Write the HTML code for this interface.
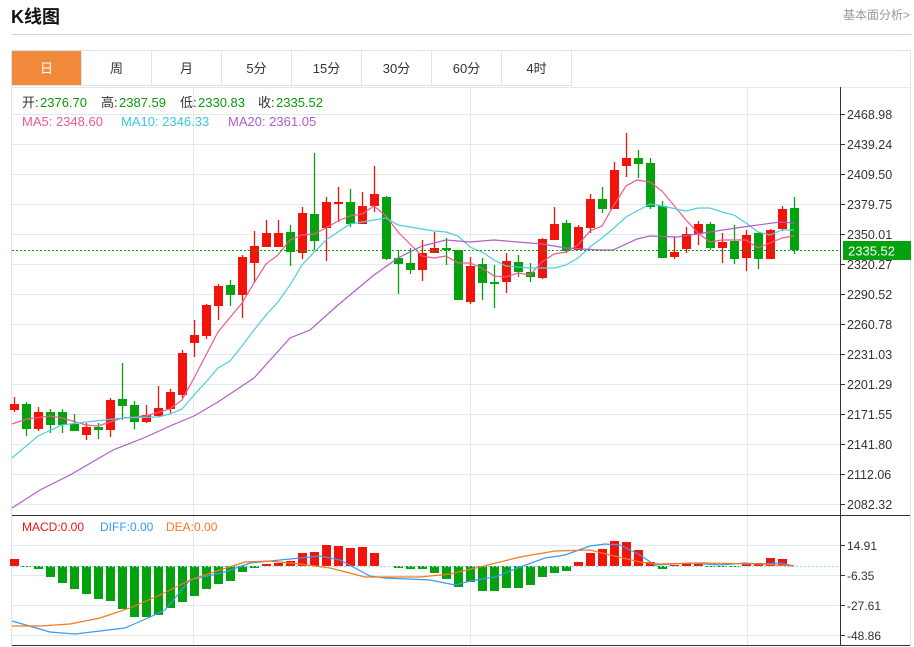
<!DOCTYPE html>
<html><head><meta charset="utf-8"><style>
*{margin:0;padding:0;box-sizing:border-box}
body{width:914px;height:647px;background:#fff;font-family:"Liberation Sans","Noto Sans CJK SC",sans-serif;position:relative;overflow:hidden}
.t{position:absolute;left:11px;top:3px;font-size:18px;font-weight:bold;color:#111}
.more{position:absolute;right:4px;top:6px;font-size:12px;color:#999}
.hl{position:absolute;left:11px;top:34px;width:900px;height:1px;background:#d0d0d0}
.box{position:absolute;left:11px;top:50px;width:900px;height:596px;border:1px solid #dde3ea}
.tabs{position:absolute;left:12px;top:51px;height:35px;display:flex}
.tabs div{width:70px;height:35px;border-right:1px solid #dde3ea;border-bottom:1px solid #dde3ea;text-align:center;line-height:35px;font-size:13px;color:#333}
.tabs div.a{background:#f28a3c;color:#fff}
svg{position:absolute;left:0;top:0}
</style></head><body>
<div class="t">K线图</div>
<div class="more">基本面分析&gt;</div>
<div class="hl"></div>
<div class="box"></div>
<div class="tabs"><div class="a">日</div><div>周</div><div>月</div><div>5分</div><div>15分</div><div>30分</div><div>60分</div><div>4时</div></div>
<svg id="s" width="914" height="647" font-family="Liberation Sans, Noto Sans CJK SC, sans-serif"></svg>
<script>
var s='';
function L(x1,y1,x2,y2,c,w,d){s+='<line x1="'+x1+'" y1="'+y1+'" x2="'+x2+'" y2="'+y2+'" stroke="'+c+'" stroke-width="'+(w||1)+'"'+(d?' stroke-dasharray="'+d+'"':'')+'/>';}
function R(x,y,w,h,c){s+='<rect x="'+x+'" y="'+y+'" width="'+w+'" height="'+Math.max(h,1)+'" fill="'+c+'"/>';}
function T(x,y,t,c,sz,a){s+='<text x="'+x+'" y="'+y+'" fill="'+c+'" font-size="'+(sz||12)+'"'+(a?' text-anchor="'+a+'"':'')+'>'+t+'</text>';}
function P(pts,c){s+='<polyline fill="none" stroke="'+c+'" stroke-width="1.2" points="'+pts.map(function(p){return p.join(',')}).join(' ')+'"/>';}
for(var k=0;k<14;k++){var y=114+30*k;L(12,y+.5,840,y+.5,'#e3e9f0');}
L(12,87.5,910,87.5,'#e3e9f0');
[193.5,470.5,747.5].forEach(function(x){L(x,87,x,515,'#e3e9f0');L(x,516,x,645,'#e3e9f0');});
[545,575,605,635].forEach(function(y){L(12,y+.5,840,y+.5,'#e3e9f0');});
L(840.5,87,840.5,645,'#333');
L(12,515.5,910,515.5,'#333');
var labs=['2468.98','2439.24','2409.50','2379.75','2350.01','2320.27','2290.52','2260.78','2231.03','2201.29','2171.55','2141.80','2112.06','2082.32'];
labs.forEach(function(t,k){var y=114+30*k;L(840,y+.5,845,y+.5,'#333');T(847,y+5,t,'#333',12.5);});
var C=[['r',404,410,397,412],['g',404,429,402,436],['r',412,429,407,431],['g',412,425,409,433],['g',412,425,409,433],['g',424,431,414,431],['r',427,435,423,440],['g',427,430,423,439],['r',400,430,398,437],['g',399,406,363,420],['g',405,422,401,429],['r',415,422,405,423],['r',408,416,386,417],['r',392,409,389,413],['r',353,395,350,398],['r',335,343,320,357],['r',305,336,304,339],['r',286,306,284,320],['g',285,295,280,306],['r',257,295,255,318],['r',246,263,231,283],['r',233,247,220,247],['r',233,247,220,247],['g',232,252,225,266],
['r',213,253,207,259],['g',214,241,153,250],['r',202,228,197,261],['r',202,204,187,222],['g',202,224,189,227],['r',206,224,192,224],['r',194,206,166,212],['g',197,259,196,260],['g',258,264,250,294],['g',263,270,248,274],['r',253,270,240,281],['r',248,253,232,253],['g',248,250,238,265],['g',250,300,250,300],['r',266,302,257,304],['g',264,283,258,300],['g',282,284,265,308],['r',261,282,253,293],['g',262,272,255,277],['g',272,277,263,282],['r',239,278,238,279],['r',224,240,207,240],['g',223,251,220,253],['r',227,250,225,250],['r',199,228,194,233],['g',199,209,187,213],['r',170,209,162,209],
['r',158,166,133,177],['g',158,164,150,178],['g',163,207,158,209],['g',206,258,201,258],['r',252,257,237,259],['r',234,249,227,253],['r',224,234,221,245],['g',224,248,222,250],['r',242,248,233,263],['g',241,259,225,264],['r',235,258,230,271],['g',233,259,232,269],['r',230,259,229,259],['r',209,229,206,231],['g',208,250,197,254]];
C.forEach(function(c,i){var x=14.5+12*i,col=c[0]=='r'?'#f2140a':'#04a20f';L(x,c[3],x,c[4],col,1.3);R(x-4.5,c[1],9,c[2]-c[1],col);});
P([[12,424],[27,419],[50,416],[62,418],[86,425],[98,426],[122,418],[146,416],[170,409],[182,400],[194,378],[206,355],[218,332],[242,303],[254,283],[266,264],[278,255],[290,240],[302,235],[314,234],[326,228],[338,221],[350,216],[362,214],[374,206],[386,216],[398,232],[410,244],[422,256],[434,258],[446,256],[458,263],[470,263],[482,268],[494,276],[506,277],[518,273],[530,275],[542,262],[554,254],[566,252],[578,245],[590,231],[602,226],[614,205],[626,186],[637,180],[650,182],[662,191],[686,220],[698,233],[710,242],[722,240],[746,240],[758,248],[770,243],[782,238],[794,236]],'#ef5a8a');
P([[12,458],[38,436],[62,425],[86,422],[122,418],[158,417],[170,414],[182,409],[194,395],[206,382],[218,368],[230,361],[242,346],[254,330],[266,315],[278,302],[290,285],[302,265],[326,240],[350,224],[374,220],[386,218],[398,225],[422,229],[434,231],[446,232],[458,236],[470,247],[482,252],[494,260],[506,266],[530,268],[554,268],[566,265],[578,258],[590,247],[602,238],[614,228],[626,217],[650,204],[662,206],[686,211],[698,208],[710,208],[722,212],[734,215],[746,223],[758,232],[770,235],[782,230],[794,230]],'#4dcde3');
P([[12,508],[40,490],[70,475],[113,450],[146,437],[170,426],[194,416],[218,402],[254,378],[290,338],[310,330],[338,305],[374,275],[398,258],[422,246],[446,240],[470,242],[494,240],[518,242],[542,244],[566,248],[600,250],[613,250],[637,239],[650,236],[677,237],[710,232],[743,227],[780,222],[794,223]],'#b35cc8');
L(12,250.5,840,250.5,'#0a0',1,'2,2');
R(843,241,68,19,'#04a20f');T(848,255.5,'2335.52','#fff',13);
var G='#0a9a0a';
T(22,107,'开:','#333',13);T(40,107,'2376.70',G,13);
T(101,107,'高:','#333',13);T(119,107,'2387.59',G,13);
T(180,107,'低:','#333',13);T(198,107,'2330.83',G,13);
T(258,107,'收:','#333',13);T(276,107,'2335.52',G,13);
T(22,126,'MA5:  2348.60','#ef5a8a',13);T(121,126,'MA10:  2346.33','#3cc8e0',13);T(228,126,'MA20:  2361.05','#b35cc8',13);
T(22,531,'MACD:0.00','#f2140a',12);T(100,531,'DIFF:0.00','#3a9af0',12);T(166,531,'DEA:0.00','#f57a1f',12);
[['14.91',545],['-6.35',575],['-27.61',605],['-48.86',635]].forEach(function(a){L(840,a[1]+.5,845,a[1]+.5,'#333');T(847,a[1]+5,a[0],'#333',12);});
var Z=566,M=[559,567,569,577,583,589,594,599,601,609,617,617,615,608,602,596,589,584,581,572,568,564,563,561,553,552,545,546,548,547,553,566,568,569,569,573,579,587,582,591,591,588,588,585,577,573,571,562,553,549,541,542,550,562,569,565,563,563,567,567,567,563,563,558,559,566];
M.forEach(function(v,i){var x=14.5+12*i;if(v<Z)R(x-4.5,v,9,Z-v,'#f2140a');else if(v>Z)R(x-4.5,Z,9,v-Z,'#04a20f');});
L(12,566.5,840,566.5,'#9fdde8',1.2,'2,2');
P([[12,621],[50,632],[75,634],[100,631],[125,628],[150,617],[165,610],[190,580],[225,572],[250,563],[270,561],[300,558],[320,556],[340,560],[370,576],[385,578],[430,580],[455,585],[470,581],[495,577],[520,567],[545,558],[565,555],[590,546],[605,544],[620,545],[640,555],[655,565],[690,563],[720,565],[745,563],[760,564],[780,563],[794,566]],'#3a9af0');
P([[12,626],[40,626],[70,624],[100,618],[130,608],[160,595],[190,580],[220,570],[245,562],[270,561],[300,564],[330,568],[365,577],[385,577],[420,577],[450,574],[480,567],[520,557],[555,551],[590,550],[610,555],[640,562],[660,564],[700,563],[760,564],[794,566]],'#f57a1f');
L(12,645.5,910,645.5,'#333');
document.getElementById('s').innerHTML=s;
</script>
</body></html>
